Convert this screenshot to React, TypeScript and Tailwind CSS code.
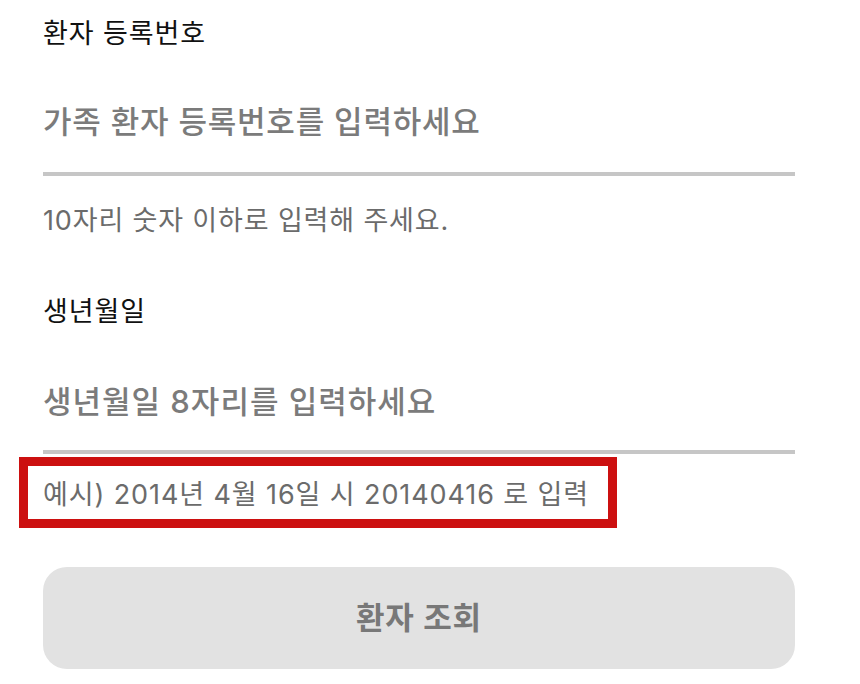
import { useState } from 'react';

const font = { fontFamily: '"Inter", "Noto Sans CJK KR", sans-serif' };

const App = () => {
  const [regNo, setRegNo] = useState('');
  const [birth, setBirth] = useState('');

  return (
    <div className="min-h-screen bg-white" style={font}>
      <div className="w-[795px] pl-[43px] pt-[20px] flex flex-col">
        {/* 환자 등록번호 */}
        <label className="block h-[27px] text-[27px] leading-[27px] tracking-[0.9px] text-[#111111]">
          환자 등록번호
        </label>
        <input
          value={regNo}
          onChange={(e) => setRegNo(e.target.value)}
          placeholder="가족 환자 등록번호를 입력하세요"
          className="mt-[24px] h-[105px] w-full border-b-[4px] border-[#c6c6c6] bg-transparent p-0 text-[31px] leading-[31px] tracking-[0.8px] font-medium text-[#222] outline-none placeholder:text-[#7b7b7b]"
        />
        <p className="mt-[31px] h-[27px] text-[27px] leading-[27px] tracking-[0.85px] text-[#6b6b6b]">
          10자리 숫자 이하로 입력해 주세요.
        </p>

        {/* 생년월일 */}
        <label className="mt-[64px] block h-[27px] text-[27px] leading-[27px] tracking-[0.9px] text-[#111111]">
          생년월일
        </label>
        <input
          value={birth}
          onChange={(e) => setBirth(e.target.value)}
          placeholder="생년월일 8자리를 입력하세요"
          className="mt-[27px] h-[102px] w-full border-b-[4px] border-[#c6c6c6] bg-transparent p-0 text-[31px] leading-[31px] tracking-[1px] font-medium text-[#222] outline-none placeholder:text-[#7b7b7b]"
        />
        <div className="relative mt-[27px] h-[27px]">
          <p className="text-[27px] leading-[27px] tracking-[0.9px] text-[#6b6b6b]">
            예시) 2014년 4월 16일 시 20140416 로 입력
          </p>
          {/* 강조 표시 */}
          <span className="pointer-events-none absolute left-[-24px] top-[-24px] h-[71px] w-[598px] border-[9px] border-[#cc1010]" />
        </div>

        <button
          type="button"
          className="mt-[59px] h-[102px] w-full rounded-[24px] bg-[#e2e2e2] text-[31px] tracking-[0.8px] font-semibold text-[#787878]"
        >
          환자 조회
        </button>
      </div>
    </div>
  );
};

export default App;
